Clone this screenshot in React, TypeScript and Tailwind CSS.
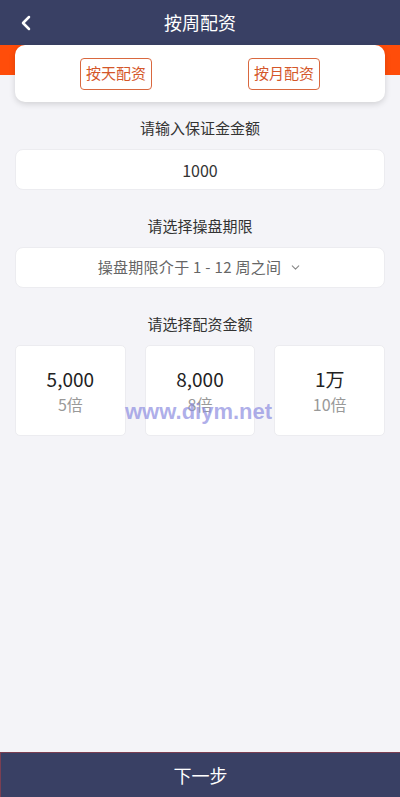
import { ChevronLeft, ChevronDown } from "lucide-react";

const font = { fontFamily: '"Microsoft YaHei", "Noto Sans CJK SC", sans-serif' };

const amounts = [
  { value: "5,000", rate: "5倍" },
  { value: "8,000", rate: "8倍" },
  { value: "1万", rate: "10倍" },
];

export default function App() {
  return (
    <div
      className="relative flex flex-col min-h-[797px] bg-[#f4f4f8] text-[#333]"
      style={font}
    >
      {/* Header */}
      <header className="relative h-[45px] bg-[#394064] flex items-center justify-center">
        <button className="absolute left-[14px] top-[11px] text-white">
          <ChevronLeft className="w-6 h-6" strokeWidth={2.5} />
        </button>
        <h1 className="text-white text-[18px]">按周配资</h1>
      </header>

      {/* Tabs */}
      <div className="relative">
        <div className="h-[30px] bg-[#ff4d0a]" />
        <div className="absolute top-0 left-[15px] right-[15px] h-[57px] bg-white rounded-[10px] shadow-[0_2px_6px_rgba(0,0,0,0.15)] flex items-center justify-between px-[65px]">
          <button className="h-[32px] px-[5px] border border-[#d9683f] rounded-[4px] text-[#d4572a] text-[15px]">
            按天配资
          </button>
          <button className="h-[32px] px-[5px] border border-[#d9683f] rounded-[4px] text-[#d4572a] text-[15px]">
            按月配资
          </button>
        </div>
      </div>

      <div className="flex flex-col px-[15px] pt-[42px]">
        <p className="text-center text-[15px] leading-[22px]">请输入保证金金额</p>
        <div className="mt-[10px] h-[41px] bg-white rounded-[8px] border border-[#ececf0] flex items-center justify-center text-[16px]">
          1000
        </div>

        <p className="mt-[25px] text-center text-[15px] leading-[22px]">请选择操盘期限</p>
        <div className="mt-[10px] h-[41px] bg-white rounded-[8px] border border-[#ececf0] flex items-center justify-center gap-[8px] text-[15px] text-[#666]">
          <span className="tracking-[0.3px]">操盘期限介于 1 - 12 周之间</span>
          <ChevronDown className="w-[13px] h-[13px] text-[#888]" />
        </div>

        <p className="mt-[25px] text-center text-[15px] leading-[22px]">请选择配资金额</p>
        <div className="mt-[10px] grid grid-cols-3 gap-[19px]">
          {amounts.map((a) => (
            <div
              key={a.value}
              className="h-[91px] bg-white rounded-[5px] border border-[#ececf0] flex flex-col items-center justify-center"
            >
              <span className="text-[19px] leading-[26px] text-[#222]">{a.value}</span>
              <span className="text-[16px] leading-[24px] text-[#999]">{a.rate}</span>
            </div>
          ))}
        </div>
      </div>

      {/* watermark */}
      <div
        className="absolute left-[125px] top-[395px] text-[22px] font-bold text-[#8c8ce0]/70"
        style={{ fontFamily: '"Liberation Sans", Arial, sans-serif' }}
      >
        www.diym.net
      </div>

      <div className="flex-1" />

      <button className="h-[45px] bg-[#394064] border-t border-l border-[#7b3f52] text-white text-[18px] flex items-center justify-center">
        下一步
      </button>
    </div>
  );
}
